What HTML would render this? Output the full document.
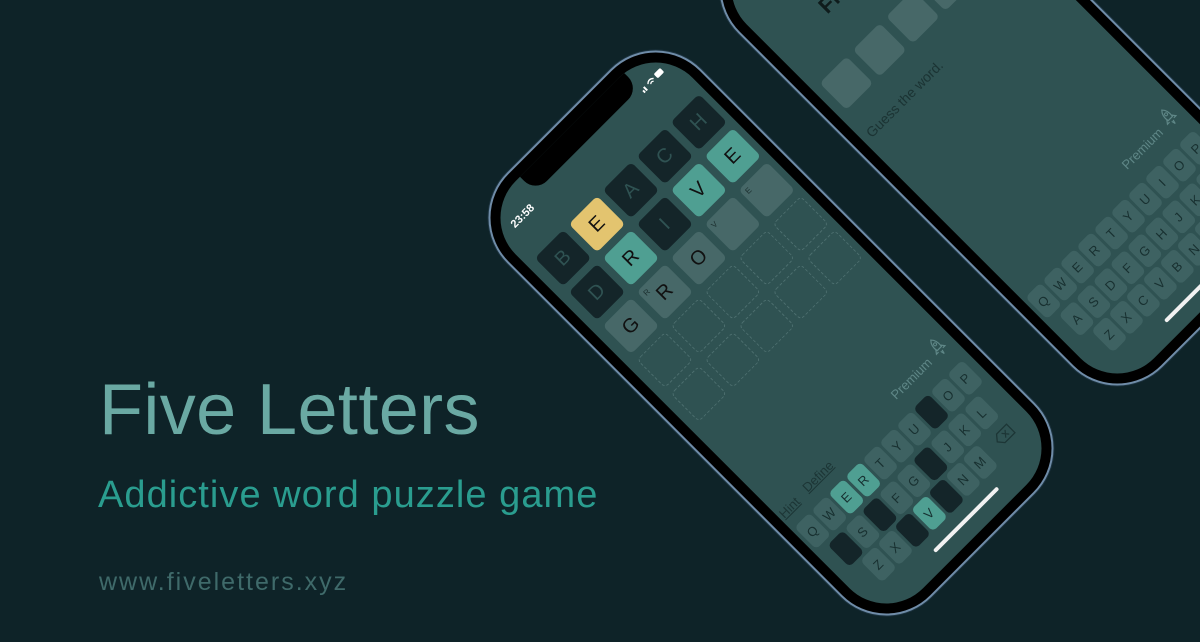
<!DOCTYPE html>
<html><head><meta charset="utf-8"><style>
*{margin:0;padding:0;box-sizing:border-box}
body{width:1200px;height:630px;background:#0e2328;overflow:hidden;position:relative;font-family:"Liberation Sans",sans-serif}
.h1{position:absolute;left:99px;top:374px;font-size:72px;line-height:1;color:#6aa9a3;white-space:nowrap;letter-spacing:0.4px}
.h2{position:absolute;left:98px;top:476px;font-size:38px;line-height:1;color:#2a9d8f;white-space:nowrap;letter-spacing:1.05px}
.h3{position:absolute;left:99px;top:570px;font-size:25px;line-height:1;color:#3f6a6a;white-space:nowrap;letter-spacing:2px}
.ph{position:absolute;width:274px;height:600px;border-radius:64px;background:#000;border:2px solid #6f8ca8;transform:rotate(-45deg);box-shadow:0 0 0 1px #1c3340}
.sc{position:absolute;left:10px;top:10px;width:250px;height:576px;border-radius:52px;background:#2f5252;overflow:hidden}
.notch{position:absolute;left:58px;top:-2px;width:147px;height:24px;background:#000;border-radius:0 0 16px 16px}
.t{position:absolute;width:40px;height:40px;border-radius:5px;font-size:20px;display:flex;align-items:center;justify-content:center;color:#111}
.d{background:#142529;color:#2f5252}
.y{background:#e3c46f}
.g{background:#4f9f92}
.n{background:#476868}
.e{border:1px dashed #4d6f6f}
.sm{position:absolute;left:4px;top:3px;font-size:8px;color:#1b2e2e}
.k{position:absolute;width:21px;height:31px;border-radius:5px;background:#3e6262;color:#183030;font-size:13px;display:flex;align-items:center;justify-content:center}
.k.d{background:#142529}
.k.g{background:#4f9f92;color:#163030}
.lbl{position:absolute;font-size:13px;line-height:1;white-space:nowrap}
</style></head><body>
<div class="h1">Five Letters</div>
<div class="h2">Addictive word puzzle game</div>
<div class="h3">www.fiveletters.xyz</div>

<!-- second phone -->
<div class="ph" style="left:865px;top:-197px">
<div class="sc">
<div class="lbl" style="left:64px;top:84px;font-size:22px;font-weight:bold;color:#0f1c1c">Five Letters</div>
<div class="t n" style="left:10px;top:145px;width:38px;height:38px"></div>
<div class="t n" style="left:57px;top:145px;width:38px;height:38px"></div>
<div class="t n" style="left:104px;top:145px;width:38px;height:38px"></div>
<div class="t n" style="left:150px;top:145px;width:38px;height:38px"></div>
<div class="t n" style="left:197px;top:145px;width:38px;height:38px"></div>
<div class="lbl" style="left:8px;top:209px;font-size:14px;color:#1b3333">Guess the word.</div>
<div class="lbl" style="left:166px;top:413px;color:#5f8787">Premium</div>
<svg style="position:absolute;left:225px;top:405px" width="16" height="22" viewBox="0 0 16 22"><path d="M8 1C11 4 12 8 11 13H5C4 8 5 4 8 1Z M5 11L2 15L5 15 M11 11L14 15L11 15 M7 16L8 20L9 16" fill="none" stroke="#5f8787" stroke-width="1.2"/><circle cx="8" cy="7" r="1.5" fill="none" stroke="#5f8787"/></svg>
<div class="k" style="left:3.5px;top:441.5px">Q</div><div class="k" style="left:27.5px;top:441.5px">W</div><div class="k" style="left:51.5px;top:441.5px">E</div><div class="k" style="left:75.5px;top:441.5px">R</div><div class="k" style="left:99.5px;top:441.5px">T</div><div class="k" style="left:123.5px;top:441.5px">Y</div><div class="k" style="left:147.5px;top:441.5px">U</div><div class="k" style="left:171.5px;top:441.5px">I</div><div class="k" style="left:195.5px;top:441.5px">O</div><div class="k" style="left:219.5px;top:441.5px">P</div>
<div class="k" style="left:14.5px;top:477.5px">A</div><div class="k" style="left:38.5px;top:477.5px">S</div><div class="k" style="left:62.5px;top:477.5px">D</div><div class="k" style="left:86.5px;top:477.5px">F</div><div class="k" style="left:110.5px;top:477.5px">G</div><div class="k" style="left:134.5px;top:477.5px">H</div><div class="k" style="left:158.5px;top:477.5px">J</div><div class="k" style="left:182.5px;top:477.5px">K</div><div class="k" style="left:206.5px;top:477.5px">L</div>
<div class="k" style="left:26.5px;top:511.5px">Z</div><div class="k" style="left:50.5px;top:511.5px">X</div><div class="k" style="left:74.5px;top:511.5px">C</div><div class="k" style="left:98.5px;top:511.5px">V</div><div class="k" style="left:122.5px;top:511.5px">B</div><div class="k" style="left:146.5px;top:511.5px">N</div><div class="k" style="left:170.5px;top:511.5px">M</div>
<div style="position:absolute;left:86px;top:556px;width:90px;height:4px;border-radius:2px;background:#f2f2f2"></div>
</div>
<div class="notch" style="left:68px;top:10px"></div>
</div>

<!-- main phone -->
<div class="ph" style="left:634px;top:33px">
<div class="sc">
<div class="notch"></div>
<div class="lbl" style="left:18px;top:25px;font-size:11px;color:#fff;font-weight:bold">23:58</div>
<svg style="position:absolute;left:205px;top:20px" width="30" height="10" viewBox="0 0 30 10"><rect x="0" y="6" width="2" height="3" fill="#fff"/><rect x="3" y="4" width="2" height="5" fill="#fff"/><path d="M9 5Q13 1 17 5M11 7Q13 5 15 7" stroke="#fff" stroke-width="1.3" fill="none"/><rect x="20" y="2" width="9" height="6" rx="1.5" fill="#fff"/></svg>

<div class="t d" style="left:11px;top:68px">B</div>
<div class="t y" style="left:59px;top:68px">E</div>
<div class="t d" style="left:107px;top:68px">A</div>
<div class="t d" style="left:155px;top:68px">C</div>
<div class="t d" style="left:203px;top:68px">H</div>

<div class="t d" style="left:11px;top:116px">D</div>
<div class="t g" style="left:59px;top:116px">R</div>
<div class="t d" style="left:107px;top:116px">I</div>
<div class="t g" style="left:155px;top:116px">V</div>
<div class="t g" style="left:203px;top:116px">E</div>

<div class="t n" style="left:11px;top:164px">G</div>
<div class="t n" style="left:59px;top:164px"><span class="sm">R</span>R</div>
<div class="t n" style="left:107px;top:164px">O</div>
<div class="t n" style="left:155px;top:164px"><span class="sm">V</span></div>
<div class="t n" style="left:203px;top:164px"><span class="sm">E</span></div>

<div class="t e" style="left:11px;top:212px"></div><div class="t e" style="left:59px;top:212px"></div><div class="t e" style="left:107px;top:212px"></div><div class="t e" style="left:155px;top:212px"></div><div class="t e" style="left:203px;top:212px"></div>
<div class="t e" style="left:11px;top:260px"></div><div class="t e" style="left:59px;top:260px"></div><div class="t e" style="left:107px;top:260px"></div><div class="t e" style="left:155px;top:260px"></div><div class="t e" style="left:203px;top:260px"></div>

<div class="lbl" style="left:3px;top:418px;color:#1c3535;text-decoration:underline">Hint</div>
<div class="lbl" style="left:38px;top:416px;color:#1c3535;text-decoration:underline">Define</div>
<div class="lbl" style="left:166px;top:413px;color:#5f8787">Premium</div>
<svg style="position:absolute;left:225px;top:405px" width="16" height="22" viewBox="0 0 16 22"><path d="M8 1C11 4 12 8 11 13H5C4 8 5 4 8 1Z M5 11L2 15L5 15 M11 11L14 15L11 15 M7 16L8 20L9 16" fill="none" stroke="#5f8787" stroke-width="1.2"/><circle cx="8" cy="7" r="1.5" fill="none" stroke="#5f8787"/></svg>

<div class="k" style="left:3.5px;top:441.5px">Q</div><div class="k" style="left:27.5px;top:441.5px">W</div><div class="k g" style="left:51.5px;top:441.5px">E</div><div class="k g" style="left:75.5px;top:441.5px">R</div><div class="k" style="left:99.5px;top:441.5px">T</div><div class="k" style="left:123.5px;top:441.5px">Y</div><div class="k" style="left:147.5px;top:441.5px">U</div><div class="k d" style="left:171.5px;top:441.5px"></div><div class="k" style="left:195.5px;top:441.5px">O</div><div class="k" style="left:219.5px;top:441.5px">P</div>
<div class="k d" style="left:14.5px;top:477.5px"></div><div class="k" style="left:38.5px;top:477.5px">S</div><div class="k d" style="left:62.5px;top:477.5px"></div><div class="k" style="left:86.5px;top:477.5px">F</div><div class="k" style="left:110.5px;top:477.5px">G</div><div class="k d" style="left:134.5px;top:477.5px"></div><div class="k" style="left:158.5px;top:477.5px">J</div><div class="k" style="left:182.5px;top:477.5px">K</div><div class="k" style="left:206.5px;top:477.5px">L</div>
<div class="k" style="left:26.5px;top:511.5px">Z</div><div class="k" style="left:50.5px;top:511.5px">X</div><div class="k d" style="left:74.5px;top:511.5px"></div><div class="k g" style="left:98.5px;top:511.5px">V</div><div class="k d" style="left:122.5px;top:511.5px"></div><div class="k" style="left:146.5px;top:511.5px">N</div><div class="k" style="left:170.5px;top:511.5px">M</div>
<svg style="position:absolute;left:207px;top:518px" width="22" height="14" viewBox="0 0 22 14"><path d="M6 1H20V13H6L1 7Z" fill="none" stroke="#1d3636" stroke-width="1.3"/><path d="M10 4L15 10M15 4L10 10" stroke="#1d3636" stroke-width="1.2"/></svg>
<div style="position:absolute;left:86px;top:556px;width:90px;height:4px;border-radius:2px;background:#f2f2f2"></div>
</div>
</div>
</body></html>
